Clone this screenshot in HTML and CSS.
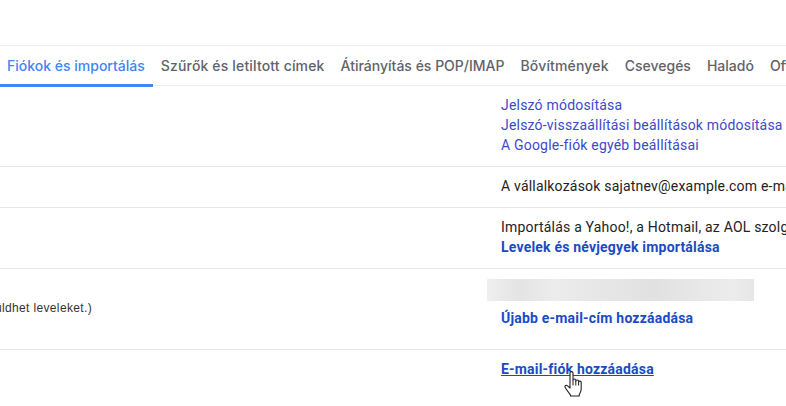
FILE: index.html
```html
<!DOCTYPE html>
<html lang="hu">
<head>
<meta charset="utf-8">
<title>Beállítások</title>
<link rel="stylesheet" href="styles.css">
</head>
<body>
<div class="page">
  <nav class="tabs">
    <a class="tab active">Fiókok és importálás</a>
    <a class="tab wide">Szűrők és letiltott címek</a>
    <a class="tab">Átirányítás és POP/IMAP</a>
    <a class="tab wide">Bővítmények</a>
    <a class="tab">Csevegés</a>
    <a class="tab">Haladó</a>
    <a class="tab">Offline</a>
  </nav>
  <section class="row row-pass">
    <div class="left"></div>
    <div class="right">
      <a class="link">Jelszó módosítása</a>
      <a class="link">Jelszó-visszaállítási beállítások módosítása</a>
      <a class="link">A Google-fiók egyéb beállításai</a>
    </div>
  </section>
  <section class="row row-biz">
    <div class="left"></div>
    <div class="right"><span class="text">A vállalkozások sajatnev@example.com e-mail-címet használhatnak</span></div>
  </section>
  <section class="row row-import">
    <div class="left"></div>
    <div class="right">
      <span class="text">Importálás a Yahoo!, a Hotmail, az AOL szolgáltatásból és más fiókokból</span>
      <a class="link strong">Levelek és névjegyek importálása</a>
    </div>
  </section>
  <section class="row row-send">
    <div class="left"><span class="note">(Más e-mail-címeiről is küldhet leveleket.)</span></div>
    <div class="right">
      <div class="blurred"></div>
      <a class="link strong">Újabb e-mail-cím hozzáadása</a>
    </div>
  </section>
  <section class="row row-add">
    <div class="left"></div>
    <div class="right">
      <span class="hover-wrap">
        <a class="link strong hovered">E-mail-fiók hozzáadása</a>
        <svg class="cursor" width="20" height="26" viewBox="0 0 20 26" aria-hidden="true">
          <path d="M6 2c0-1.8 3-1.8 3 0V9c0-1.4 2.8-1.4 2.8 0v1c0-1.4 2.8-1.4 2.8 0v1c0-1.2 2.6-1.2 2.6.3V18c0 3-1.5 4.5-2 6v1H6.5v-1C5 22 3 19.5 1.2 16.5c-1-1.8 1-3 2.4-1.6L6 17Z" fill="#fff" stroke="#222" stroke-width="1.1" stroke-linejoin="round"/>
          <path d="M9 9v5.5M11.8 10v4.5M14.6 11v3.5" fill="none" stroke="#222" stroke-width="1"/>
        </svg>
      </span>
    </div>
  </section>
</div>
</body>
</html>
```
FILE: styles.css
```css
html, body {
  margin: 0;
  padding: 0;
  background: #fff;
  overflow: hidden;
}
.page {
  width: 786px;
  height: 406px;
  overflow: hidden;
  padding-top: 45px;
  box-sizing: border-box;
  font-family: Roboto, "Liberation Sans", sans-serif;
  font-size: 14px;
  letter-spacing: 0.2px;
  color: #222;
}
.tabs {
  display: flex;
  height: 41px;
  box-sizing: border-box;
  border-top: 1px solid #eee;
  border-bottom: 1px solid #eee;
  white-space: nowrap;
}
.tab {
  padding: 0 8px;
  font-family: Inter, Roboto, sans-serif;
  font-size: 14px;
  font-weight: 500;
  letter-spacing: 0;
  line-height: 39px;
  color: #5f6368;
  flex: none;
}
.tab.wide {
  letter-spacing: 0.16px;
}
.tab.active {
  color: #4285f4;
  height: 38px;
  padding-left: 7px;
  border-bottom: 3px solid #4285f4;
}
.row {
  display: grid;
  grid-template-columns: 92px 1fr;
  column-gap: 409px;
  border-bottom: 1px solid #e6e6e6;
  box-sizing: border-box;
  white-space: nowrap;
  overflow: hidden;
  padding-top: 9px;
}
.row-pass { height: 81px; }
.row-biz { height: 41px; }
.row-import { height: 61px; }
.row-send { height: 81px; padding-top: 10px; }
.row-add { border-bottom: 0; overflow: visible; }
.left {
  display: flex;
  justify-content: flex-end;
  align-items: flex-start;
}
.note {
  margin-top: 20px;
  font-family: "Liberation Sans", Arial, sans-serif;
  font-size: 12px;
  letter-spacing: 0.35px;
  line-height: 18px;
  color: #333;
}
.right {
  display: flex;
  flex-direction: column;
  align-items: flex-start;
  line-height: 20px;
}
.link { color: #3c4ac8; }
.text { color: #222; }
.strong { font-weight: 700; color: #1a4bc4; }
.hovered { text-decoration: underline; color: #1a4bc4; }
.blurred {
  width: 267px;
  height: 22px;
  margin-left: -14px;
  margin-bottom: 7px;
  background: linear-gradient(90deg, #efefef 0%, #e4e4e4 12%, #ececec 25%, #e6e6e6 45%, #e1e1e1 62%, #e8e8e8 80%, #ececec 92%, #e6e6e6 100%);
}
.hover-wrap {
  position: relative;
  display: block;
}
.cursor {
  position: absolute;
  left: 63px;
  top: 12px;
}
```
